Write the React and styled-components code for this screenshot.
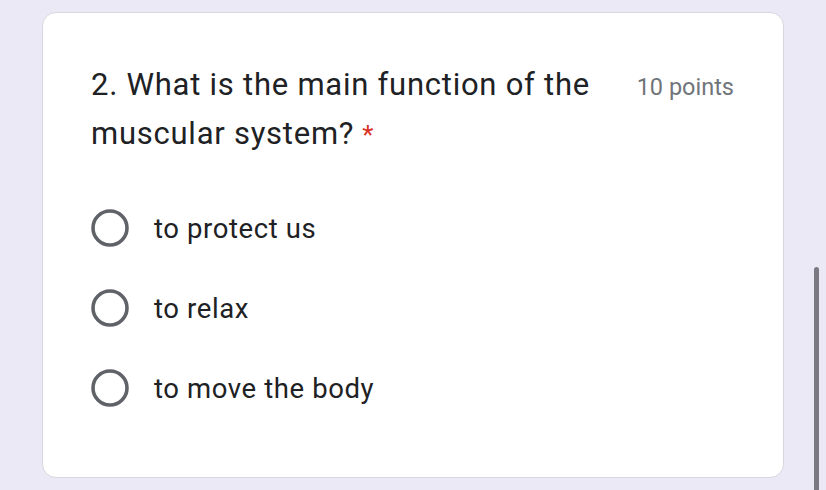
import React from "react";
import styled, { createGlobalStyle } from "styled-components";

const GlobalStyle = createGlobalStyle`
  html, body {
    margin: 0;
    padding: 0;
    height: 100%;
    overflow: hidden;
  }
  body {
    background-color: #ece9f6;
    font-family: Roboto, "Noto Sans", sans-serif;
  }
`;

const options = ["to protect us", "to relax", "to move the body"];

function Radio() {
  return (
    <svg width="40" height="40" viewBox="0 0 40 40">
      <circle cx="20" cy="20" r="17" fill="none" stroke="#5f6368" strokeWidth="3.6" />
    </svg>
  );
}

export default function App() {
  return (
    <Page>
      <GlobalStyle />
      <Card>
        <Header>
          <Title>
            2. What is the main function of the muscular system?
            <Required>*</Required>
          </Title>
          <Points>10 points</Points>
        </Header>
        <Options>
          {options.map((opt) => (
            <Option key={opt}>
              <Radio />
              <Label>{opt}</Label>
            </Option>
          ))}
        </Options>
      </Card>
      <ScrollThumb />
    </Page>
  );
}

const Page = styled.div`
  position: relative;
  width: 826px;
  height: 490px;
  padding: 12px 42px 0 42px;
  box-sizing: border-box;
`;

const Card = styled.div`
  width: 742px;
  height: 466px;
  box-sizing: border-box;
  background: #ffffff;
  border: 1.5px solid #d8d7de;
  border-radius: 14px;
  padding: 52px 48px 0 48px;
`;

const Header = styled.div`
  display: flex;
  align-items: flex-start;
  gap: 20px;
`;

const Title = styled.div`
  flex: 1;
  font-size: 31px;
  line-height: 49px;
  color: #202124;
  margin-top: -5px;
  letter-spacing: 0.75px;
`;

const Required = styled.span`
  display: inline-block;
  margin-left: 8px;
  color: #d93025;
  font-size: 26px;
  line-height: 1;
`;

const Points = styled.div`
  font-size: 23.5px;
  color: #70757a;
  padding-top: 8px;
  padding-right: 1px;
  white-space: nowrap;
`;

const Options = styled.div`
  display: flex;
  flex-direction: column;
  gap: 40px;
  margin-top: 50px;
`;

const Option = styled.div`
  display: flex;
  align-items: center;
  height: 40px;
  margin-left: -1px;
  gap: 24px;
`;

const Label = styled.span`
  font-size: 27.5px;
  letter-spacing: 0.6px;
  color: #202124;
`;

const ScrollThumb = styled.div`
  position: absolute;
  left: 814px;
  top: 267px;
  width: 5px;
  height: 240px;
  border-radius: 3px;
  background: #7b7882;
`;
